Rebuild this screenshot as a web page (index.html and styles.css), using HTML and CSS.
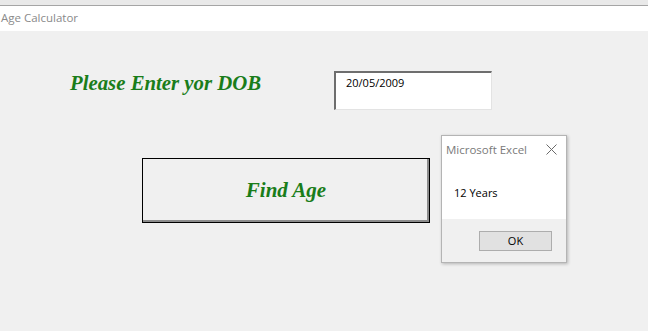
FILE: index.html
```html
<!DOCTYPE html>
<html lang="en">
<head>
    <meta charset="UTF-8">
    <title>Age Calculator</title>
    <link rel="stylesheet" href="styles.css">
</head>
<body>
    <div id="window">
        <div id="topStrip"></div>
        <div id="titleBar">Age Calculator</div>
        <div id="form">
            <div id="dobRow">
                <div id="dobLabel">Please Enter yor DOB</div>
                <div id="dobInput">20/05/2009</div>
            </div>
            <div id="findBtn">Find Age</div>
        </div>

        <div id="msgBox">
            <div id="msgTitle">
                <span>Microsoft Excel</span>
                <svg id="msgClose" width="11" height="11" viewBox="0 0 11 11">
                    <path d="M0.5 0.5 L10.5 10.5 M10.5 0.5 L0.5 10.5" stroke="#6a6a6a" stroke-width="1" fill="none"/>
                </svg>
            </div>
            <div id="msgBody">12 Years</div>
            <div id="msgFooter">
                <div id="okBtn">OK</div>
            </div>
        </div>
    </div>
</body>
</html>
```

FILE: styles.css
```css
body { margin: 0; padding: 0; background: #f0f0f0; font-family: "Open Sans", Arial, sans-serif; }
#window { position: relative; width: 648px; height: 331px; overflow: hidden; }

#topStrip {
    height: 5px;
    background: #e9e9e9;
    border-bottom: 1px solid #a5a5a5;
}
#titleBar {
    height: 25px;
    background: #fff;
    color: #8a8a8a;
    font-size: 11.5px;
    line-height: 24px;
    padding-left: 1px;
}

#form { padding: 40px 0 0 0; }
#dobRow { display: flex; align-items: flex-start; }
#dobLabel {
    margin-left: 70px;
    width: 264px;
    color: #1a7d1a;
    font-family: "Liberation Serif", "Times New Roman", serif;
    font-weight: bold;
    font-style: italic;
    font-size: 20.8px;
}
#dobInput {
    width: 145px;
    height: 29px;
    background: #fff;
    border-top: 2px solid #6e6e6e;
    border-left: 2px solid #6e6e6e;
    border-right: 1px solid #e3e3e3;
    border-bottom: 1px solid #e3e3e3;
    padding: 2px 0 5px 10px;
    font-size: 11px;
    color: #000;
    line-height: 15px;
}

#findBtn {
    margin: 48px 0 0 142px;
    width: 286px;
    height: 63px;
    border: 1px solid #000;
    box-shadow: inset -2px -2px 0 #8c8c8c;
    display: flex;
    align-items: center;
    justify-content: center;
    color: #1a7d1a;
    font-family: "Liberation Serif", "Times New Roman", serif;
    font-weight: bold;
    font-style: italic;
    font-size: 21px;
}

#msgBox {
    position: absolute;
    left: 441px;
    top: 135px;
    width: 124px;
    height: 126px;
    border: 1px solid #b4b4b4;
    background: #fff;
    box-shadow: 1px 1px 3px rgba(0, 0, 0, 0.25);
    display: flex;
    flex-direction: column;
}
#msgTitle {
    height: 26px;
    display: flex;
    align-items: center;
    justify-content: space-between;
    padding: 0 9px 0 4px;
    color: #7a7a7a;
    font-size: 11.5px;
}
#msgBody {
    flex: 1;
    padding: 23px 0 0 12px;
    font-size: 11px;
    color: #000;
}
#msgFooter {
    height: 43px;
    background: #f0f0f0;
    display: flex;
    justify-content: flex-end;
    align-items: flex-start;
}
#okBtn {
    margin: 12px 14px 0 0;
    width: 71px;
    height: 18px;
    border: 1px solid #adadad;
    background: #e1e1e1;
    font-size: 11px;
    text-align: center;
    line-height: 18px;
    color: #000;
}
```
